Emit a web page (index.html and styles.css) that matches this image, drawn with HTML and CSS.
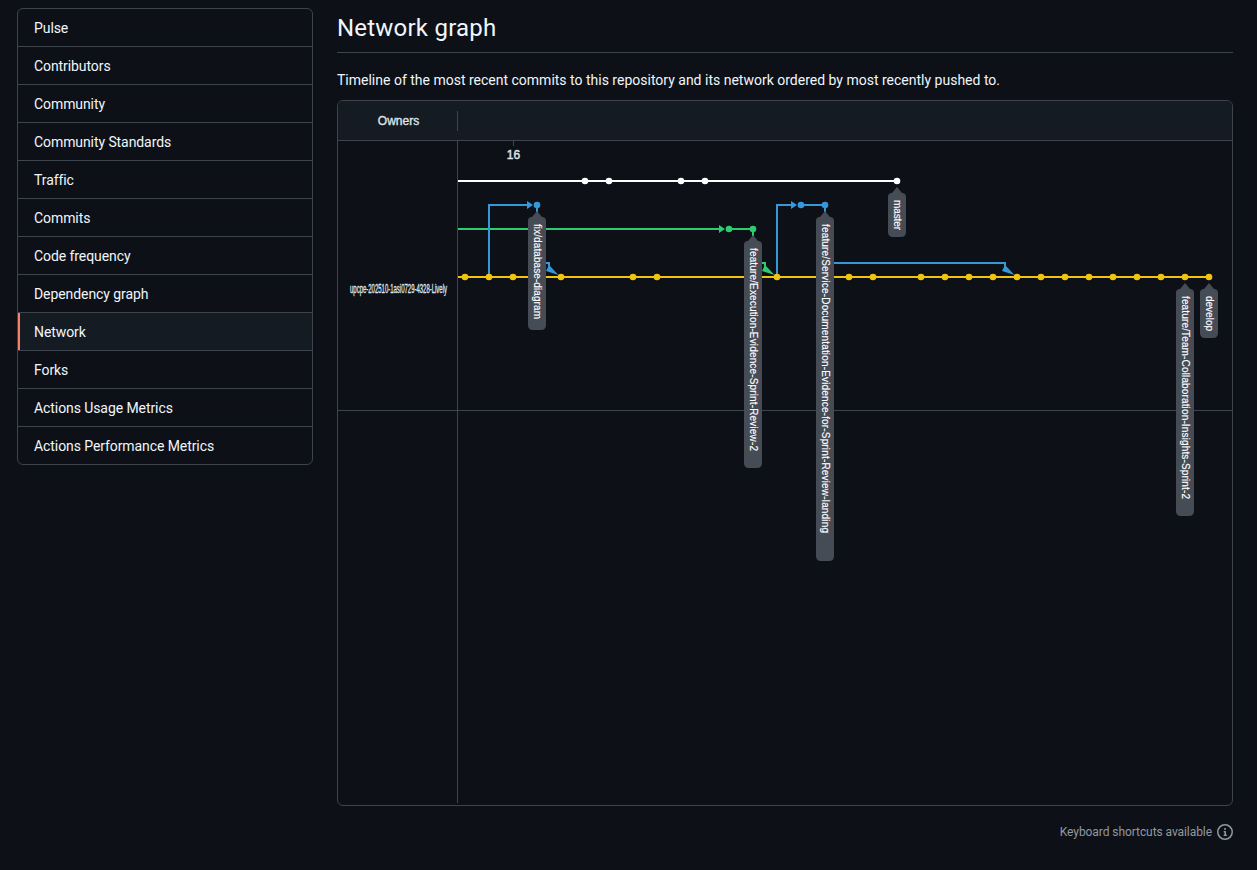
FILE: index.html
```html
<!DOCTYPE html>
<html lang="en">
<head>
<meta charset="utf-8">
<title>Network graph</title>
<link rel="stylesheet" href="styles.css">
</head>
<body>
<div class="layout">
  <nav class="side-nav">
    <a class="nav-item">Pulse</a>
    <a class="nav-item">Contributors</a>
    <a class="nav-item">Community</a>
    <a class="nav-item">Community Standards</a>
    <a class="nav-item">Traffic</a>
    <a class="nav-item">Commits</a>
    <a class="nav-item">Code frequency</a>
    <a class="nav-item">Dependency graph</a>
    <a class="nav-item nav-item-active">Network</a>
    <a class="nav-item">Forks</a>
    <a class="nav-item">Actions Usage Metrics</a>
    <a class="nav-item">Actions Performance Metrics</a>
  </nav>
  <main class="content">
    <h2 class="page-title">Network graph</h2>
    <p class="lead">Timeline of the most recent commits to this repository and its network ordered by most recently pushed to.</p>
    <section class="network">
      <div class="network-head">
        <div class="owners-head"><span>Owners</span></div>
      </div>
      <svg class="graph" viewBox="338 141 894 664" width="894" height="664" xmlns="http://www.w3.org/2000/svg">
        <line class="rule" x1="457.5" y1="141" x2="457.5" y2="803"/>
        <line class="rule" x1="338" y1="410.5" x2="1232" y2="410.5"/>
        <line class="rule" x1="513.5" y1="141" x2="513.5" y2="146"/>
        <text class="date" x="513.5" y="159">16</text>
        <text class="owner" x="350" y="293" textLength="97" lengthAdjust="spacingAndGlyphs">upcpe-202510-1asi0729-4328-Lively</text>

        <path class="ln white" d="M458 181H897"/>
        <path class="ln green" d="M458 229H720M729 229H753V240"/>
        <path class="ln blue" d="M489 277V205H528M537 205V212"/>
        <path class="ln blue" d="M777 277V205H792M801 205H825V212"/>
        <path class="ln blue" d="M825 263H1005V269"/>
        <path class="ln blue" d="M546 263H549V269"/>
        <path class="ln green" d="M762 263H765V269"/>
        <path class="ln yellow" d="M458 277H1209"/>

        <polygon class="fill-blue" points="527,201 533,205 527,209"/>
        <polygon class="fill-green" points="719,225 725,229 719,233"/>
        <polygon class="fill-blue" points="791,201 797,205 791,209"/>
        <polygon class="fill-blue" points="549,265 558.5,275 546,271"/>
        <polygon class="fill-green" points="765,265 774.5,275 762,271"/>
        <polygon class="fill-blue" points="1005,265 1014.5,275 1002,271"/>

        <g class="fill-white">
          <circle cx="585" cy="181" r="3.3"/><circle cx="609" cy="181" r="3.3"/><circle cx="681" cy="181" r="3.3"/><circle cx="705" cy="181" r="3.3"/><circle cx="897" cy="181" r="3.3"/>
        </g>
        <g class="fill-blue">
          <circle cx="537" cy="205" r="3.3"/><circle cx="801" cy="205" r="3.3"/><circle cx="825" cy="205" r="3.3"/>
        </g>
        <g class="fill-green">
          <circle cx="729" cy="229" r="3.3"/><circle cx="753" cy="229" r="3.3"/>
        </g>
        <g class="fill-yellow">
          <circle cx="465" cy="277" r="3.3"/><circle cx="489" cy="277" r="3.3"/><circle cx="513" cy="277" r="3.3"/><circle cx="561" cy="277" r="3.3"/><circle cx="633" cy="277" r="3.3"/><circle cx="657" cy="277" r="3.3"/><circle cx="777" cy="277" r="3.3"/><circle cx="849" cy="277" r="3.3"/><circle cx="873" cy="277" r="3.3"/><circle cx="921" cy="277" r="3.3"/><circle cx="945" cy="277" r="3.3"/><circle cx="969" cy="277" r="3.3"/><circle cx="993" cy="277" r="3.3"/><circle cx="1017" cy="277" r="3.3"/><circle cx="1041" cy="277" r="3.3"/><circle cx="1065" cy="277" r="3.3"/><circle cx="1089" cy="277" r="3.3"/><circle cx="1113" cy="277" r="3.3"/><circle cx="1137" cy="277" r="3.3"/><circle cx="1161" cy="277" r="3.3"/><circle cx="1185" cy="277" r="3.3"/><circle cx="1209" cy="277" r="3.3"/>
        </g>

        <g>
          <path class="tag" d="M537 211L542 217Q546 217 546 221V325Q546 330 541 330H533Q528 330 528 325V221Q528 217 532 217Z"/>
          <text class="tag-text" transform="translate(534 224) rotate(90)" textLength="95">fix/database-diagram</text>
        </g>
        <g>
          <path class="tag" d="M753 235L758 241Q762 241 762 245V463Q762 468 757 468H749Q744 468 744 463V245Q744 241 748 241Z"/>
          <text class="tag-text" transform="translate(750 248) rotate(90)" textLength="203">feature/Execution-Evidence-Sprint-Review-2</text>
        </g>
        <g>
          <path class="tag" d="M825 211L830 217Q834 217 834 221V556Q834 561 829 561H821Q816 561 816 556V221Q816 217 820 217Z"/>
          <text class="tag-text" transform="translate(822 224) rotate(90)" textLength="309">feature/Service-Documentation-Evidence-for-Sprint-Review-landing</text>
        </g>
        <g>
          <path class="tag" d="M897 187L902 193Q906 193 906 197V232Q906 237 901 237H893Q888 237 888 232V197Q888 193 892 193Z"/>
          <text class="tag-text" transform="translate(894 200) rotate(90)" textLength="30">master</text>
        </g>
        <g>
          <path class="tag" d="M1185 283L1190 289Q1194 289 1194 293V511Q1194 516 1189 516H1181Q1176 516 1176 511V293Q1176 289 1180 289Z"/>
          <text class="tag-text" transform="translate(1182 296) rotate(90)" textLength="203">feature/Team-Collaboration-Insights-Sprint-2</text>
        </g>
        <g>
          <path class="tag" d="M1209 283L1214 289Q1218 289 1218 293V333Q1218 338 1213 338H1205Q1200 338 1200 333V293Q1200 289 1204 289Z"/>
          <text class="tag-text" transform="translate(1206 296) rotate(90)" textLength="35">develop</text>
        </g>
      </svg>
    </section>
    <div class="shortcuts">
      <span>Keyboard shortcuts available</span>
      <svg class="info-icon" viewBox="0 0 16 16" width="16" height="16" xmlns="http://www.w3.org/2000/svg"><path d="M0 8a8 8 0 1 1 16 0A8 8 0 0 1 0 8Zm8-6.5a6.5 6.5 0 1 0 0 13 6.5 6.5 0 0 0 0-13ZM6.5 7.75A.75.75 0 0 1 7.25 7h1a.75.75 0 0 1 .75.75v2.75h.25a.75.75 0 0 1 0 1.5h-2a.75.75 0 0 1 0-1.5h.25v-2h-.25a.75.75 0 0 1-.75-.75ZM8 6a1 1 0 1 1 0-2 1 1 0 0 1 0 2Z"/></svg>
    </div>
  </main>
</div>
</body>
</html>
```
FILE: styles.css
```css
* { box-sizing: border-box; }
html, body { margin: 0; padding: 0; }
body {
  background: #0d1117;
  color: #f0f6fc;
  font-family: Roboto, "Noto Sans", "Liberation Sans", sans-serif;
  font-size: 14px;
  height: 870px;
  overflow: hidden;
}
.layout {
  display: flex;
  gap: 24px;
  padding: 8px 24px 0 17px;
}
.side-nav {
  flex: 0 0 296px;
  align-self: flex-start;
  display: flex;
  flex-direction: column;
  border: 1px solid #3d444d;
  border-radius: 6px;
  overflow: hidden;
}
.nav-item {
  display: flex;
  align-items: center;
  height: 38px;
  padding: 0 16px;
  border-bottom: 1px solid #3d444d;
  position: relative;
  letter-spacing: -0.08px;
}
.nav-item:last-child { border-bottom: 0; height: 37px; }
.nav-item-active { background: #151b23; }
.nav-item-active::before {
  content: "";
  position: absolute;
  left: 0;
  top: 0;
  bottom: 0;
  width: 2px;
  background: #f78166;
}
.content { flex: 0 0 896px; }
.page-title {
  margin: 0;
  height: 45px;
  padding-top: 2px;
  font-size: 24px;
  line-height: 36px;
  font-weight: 400;
  letter-spacing: 0.22px;
  border-bottom: 1px solid #3d444d;
}
.lead {
  margin: 0;
  padding-top: 17px;
  height: 47px;
  line-height: 20px;
}
.network {
  width: 896px;
  height: 706px;
  border: 1px solid #3d444d;
  border-radius: 6px;
  overflow: hidden;
}
.network-head {
  height: 40px;
  background: #151b23;
  border-bottom: 1px solid #3d444d;
  display: flex;
  align-items: center;
}
.owners-head {
  width: 120px;
  height: 20px;
  padding-left: 2px;
  border-right: 1px solid #3d444d;
  display: flex;
  align-items: center;
  justify-content: center;
  font: 12px "Liberation Sans", sans-serif;
  color: #dfe4ea;
  -webkit-text-stroke: 0.35px #dfe4ea;
}
.graph { display: block; }
.rule { stroke: #3d444d; stroke-width: 1; }
.date {
  font: 12px "Liberation Sans", sans-serif;
  fill: #dfe4ea;
  stroke: #dfe4ea;
  stroke-width: 0.45px;
  text-anchor: middle;
}
.owner {
  font: 12px "Liberation Sans", sans-serif;
  fill: #dfe4ea;
  stroke: #dfe4ea;
  stroke-width: 0.35px;
}
.ln { fill: none; stroke-width: 2; }
.white { stroke: #ffffff; }
.green { stroke: #2ecc71; }
.blue { stroke: #3498db; }
.yellow { stroke: #f1c40f; }
.fill-white { fill: #ffffff; }
.fill-green { fill: #2ecc71; }
.fill-blue { fill: #3498db; }
.fill-yellow { fill: #f1c40f; }
.tag { fill: #454c56; }
.tag-text {
  font: 10px "Liberation Sans", sans-serif;
  fill: #ffffff;
  stroke: #ffffff;
  stroke-width: 0.15px;
}
.shortcuts {
  display: flex;
  justify-content: flex-end;
  align-items: center;
  gap: 5px;
  margin-top: 18px;
  font-size: 12px;
  letter-spacing: -0.07px;
  color: #9198a1;
}
.info-icon { fill: #9198a1; }
```
